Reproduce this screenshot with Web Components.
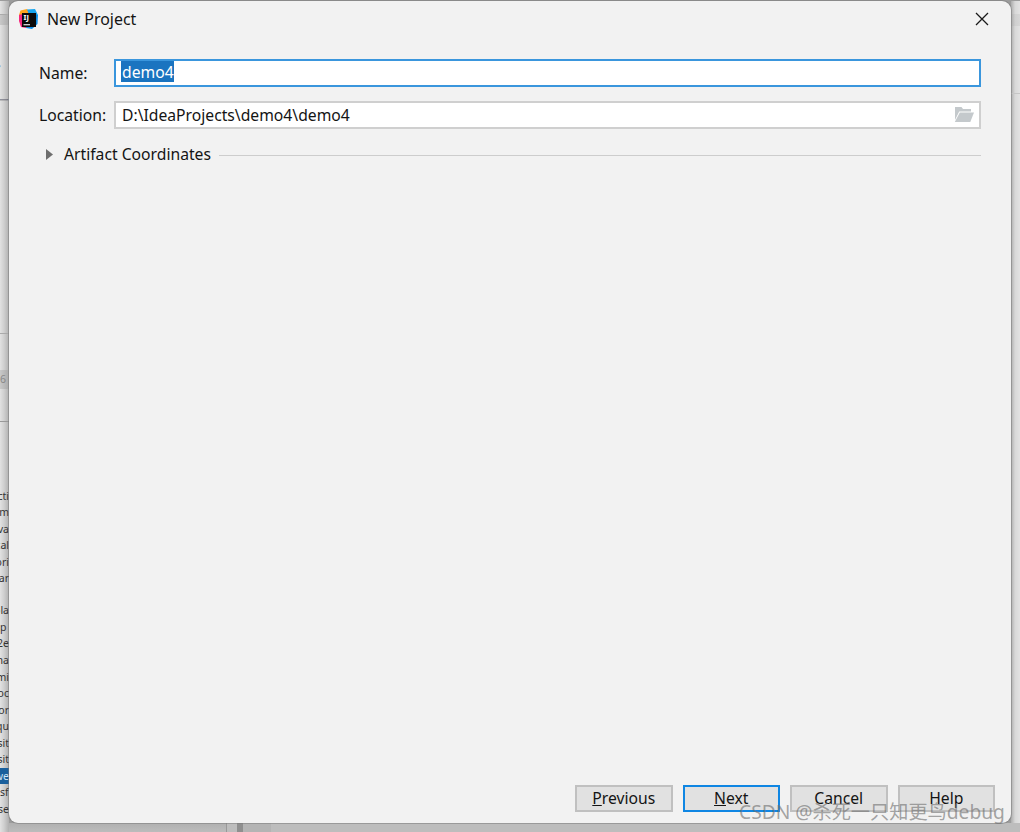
<!DOCTYPE html>
<html><head><meta charset="utf-8">
<style>
html,body{margin:0;padding:0;height:100%;overflow:hidden}
body{width:1020px;height:832px;font-family:"Noto Sans","Open Sans",sans-serif}
</style></head><body>
<template id="t-desktop">
<style>
:host{display:block;position:relative;width:1020px;height:832px;overflow:hidden;background:#9c9c9c}
.left{position:absolute;left:0;top:1px;bottom:0;width:9px;display:flex;flex-direction:column;background:linear-gradient(90deg,#e2e2e2,#cfcfcf 45%,#b0b0b0);overflow:hidden}
.sp{flex:none}
.band{background:linear-gradient(90deg,#c9c9c9,#a9a9a9)}
.ln{flex:none;font:10.5px/16.55px "Noto Sans",sans-serif;height:16.55px;color:#333;white-space:nowrap;direction:rtl;text-align:left;overflow:hidden;width:9px}
.sel{background:#1a5f9c;color:#cfe4f5}
.tall{font-size:17px;line-height:20px;height:20px;color:#4a3f8c}
.tiny{color:#556}
.bottom{position:absolute;left:0;right:0;bottom:0;height:9px;background:#b9b9b9;display:flex}
.bottom i{display:block;height:100%}
.right{position:absolute;right:0;top:1px;bottom:0;width:9px;display:flex;flex-direction:column;background:linear-gradient(90deg,#adadad,#d8d8d8 45%,#e2e2e2)}
::slotted(*){position:absolute}
</style>
<div class="right">
<div class="sp" style="height:13px"></div>
<div class="sp" style="height:12px;background:linear-gradient(90deg,#a9a9a9,#cfcfcf 45%,#d6d6d6)"></div>
<div class="sp" style="height:67px;border-bottom:1px solid #c6c6c6"></div>
</div>
<div class="bottom"><i style="width:226px;background:linear-gradient(#b0b0b0,#bcbcbc);border-right:1px solid #999"></i><i style="width:10px;background:#bdbdbd"></i><i style="width:6px;background:#8f8f8f"></i><i style="width:28px;background:#b4b4b4"></i><i style="flex:1;background:#bdbdbd"></i></div>
<div class="left">
<div class="sp" style="height:13px;border-bottom:1px solid #aaa"></div>
<div class="sp band" style="height:10px"></div>
<div class="sp" style="height:38px"></div>
<div class="ln tall">亻</div>
<div class="sp" style="height:9px"></div>
<div class="ln tiny">一</div>
<div class="sp" style="height:224px;border-bottom:1px solid #aaa"></div>
<div class="sp" style="height:36px"></div>
<div class="ln band" style="color:#888;height:19px;line-height:19px">6</div>
<div class="sp" style="height:32px;border-bottom:1px solid #999"></div>
<div class="sp" style="height:66px"></div>
<div class="ln">cti</div><div class="ln">om</div><div class="ln">va</div><div class="ln">cal</div><div class="ln">ori</div><div class="ln">ar</div>
<div class="sp" style="height:15.5px"></div>
<div class="ln">ola</div><div class="ln">p</div><div class="ln">2e</div><div class="ln">ma</div><div class="ln">mi</div><div class="ln">oc</div><div class="ln">or</div><div class="ln">qu</div><div class="ln">sit</div><div class="ln">sit</div><div class="ln sel">we</div><div class="ln">sf</div><div class="ln">se</div>
</div>
<slot></slot>
</template>

<template id="t-dialog">
<style>
:host{left:9px;top:1px;width:1002px;height:822px;display:flex;flex-direction:column;background:#f2f2f2;border-radius:9px;box-sizing:border-box;box-shadow:0 0 0 1px rgba(120,120,120,.5);font:15.7px "Noto Sans",sans-serif;color:#141414}
.title{flex:none;height:36px;display:flex;align-items:center;padding-left:9px;gap:9px}
.title svg{flex:none}
.title span{flex:1;font-size:15.9px;line-height:36px}
.close{width:14px;height:14px;margin-right:22px}
.content{flex:1;display:flex;flex-direction:column;padding:22px 30px 0 30px}
.foot{flex:none;display:flex;justify-content:flex-end;gap:10px;padding:0 16px 11px 0}
</style>
<div class="title">
<svg width="20" height="20" viewBox="0 0 20 20" style="margin-top:-1px">
<path d="M2.5 1.5 L9 0 L12 4 L4 10 L1 6Z" fill="#ffa51f"/>
<path d="M1 6 L5 5 L9 14 L8 19 L3 18 L1 12Z" fill="#f5267c"/>
<path d="M9 0.5 L17 0 L20 6 L17 10 L12 8Z" fill="#17a4ee"/>
<path d="M14 5 L20 6 L19.5 15 L14 20 L8 19 L9 12Z" fill="#0c8fea"/>
<path d="M4 4h14v14H4z" fill="#0a0a0a"/>
<path d="M5.5 15.2h6.5v1.1H5.5z" fill="#fff"/>
<text x="5.5" y="11.3" font-family="Noto Sans" font-weight="700" font-size="7.5" fill="#fff">IJ</text></svg>
<span>New Project</span>
<svg class="close" viewBox="0 0 14 14"><path d="M1 1L13 13M13 1L1 13" stroke="#1a1a1a" stroke-width="1.3" fill="none"/></svg>
</div>
<div class="content"><slot></slot></div>
<div class="foot"><slot name="foot"></slot></div>
</template>

<template id="t-field">
<style>
:host{display:grid;grid-template-columns:75px 1fr;align-items:center;margin-bottom:14.5px;height:27.5px}
label{white-space:nowrap}
.box{height:27.5px;box-sizing:border-box;background:#fff;border:2px solid #cfcfcf;display:flex;align-items:center;padding-left:6px;justify-content:space-between}
:host([focus]) .box{border:2px solid #3a96dd}
.sel{background:#1a74c0;color:#fff;display:block;align-self:flex-start;line-height:23px;height:21px;margin-left:-1px;padding:0 .5px 0 1px}
::slotted(svg){margin-right:5px;flex:none}
</style>
<label></label><div class="box"><span class="v"></span><slot></slot></div>
</template>

<template id="t-sep">
<style>
:host{display:flex;align-items:center;height:24px;margin-top:-1px}
svg{margin-left:7px;margin-right:11px;flex:none}
span{white-space:nowrap}
i{flex:1;height:1px;background:#cdcdcd;margin-left:8px;margin-top:2px}
</style>
<svg width="7" height="11" viewBox="0 0 7 11"><path d="M0 0L7 5.5L0 11Z" fill="#6e6e6e"/></svg><span><slot></slot></span><i></i>
</template>

<template id="t-btn">
<style>
:host{display:block;width:97.5px;height:27.5px;box-sizing:border-box;background:#e1e1e1;border:2px solid #c0c0c0;text-align:center;font-size:15.7px;line-height:23px;color:#141414}
:host([primary]){border-color:#0f86e3}
</style>
<slot></slot>
</template>

<template id="t-mark">
<style>
:host{left:739px;top:800px;font:19.2px/24px "Noto Sans","Noto Sans CJK SC",sans-serif;color:rgba(110,110,110,.62);white-space:nowrap}
</style>
<slot></slot>
</template>

<app-desktop>
<ide-dialog>
<form-field label="Name:" value="demo4" focus></form-field>
<form-field label="Location:" value="D:\IdeaProjects\demo4\demo4"><svg width="20" height="15" viewBox="0 0 20 15"><path d="M1 0h6.5l1.5 2H17v2.6H5.2L1 13z" fill="#c4c9cc"/><path d="M5.8 5.6H20L16.3 15H0.8z" fill="#c4c9cc"/></svg></form-field>
<section-sep>Artifact Coordinates</section-sep>
<wizard-btn slot="foot"><u>P</u>revious</wizard-btn>
<wizard-btn slot="foot" primary><u>N</u>ext</wizard-btn>
<wizard-btn slot="foot">Cancel</wizard-btn>
<wizard-btn slot="foot">Help</wizard-btn>
</ide-dialog>
<water-mark>CSDN @杀死一只知更鸟debug</water-mark>
</app-desktop>

<script>
function def(name,tpl){
  customElements.define(name,class extends HTMLElement{
    constructor(){super();this.attachShadow({mode:'open'}).appendChild(document.getElementById(tpl).content.cloneNode(true));}
  });
}
def('app-desktop','t-desktop');
def('ide-dialog','t-dialog');
def('section-sep','t-sep');
def('wizard-btn','t-btn');
def('water-mark','t-mark');
customElements.define('form-field',class extends HTMLElement{
  constructor(){super();this.attachShadow({mode:'open'}).appendChild(document.getElementById('t-field').content.cloneNode(true));}
  connectedCallback(){
    const r=this.shadowRoot;
    r.querySelector('label').textContent=this.getAttribute('label');
    const v=r.querySelector('.v');v.textContent=this.getAttribute('value');
    if(this.hasAttribute('focus'))v.className='v sel';
  }
});
</script>
</body></html>
